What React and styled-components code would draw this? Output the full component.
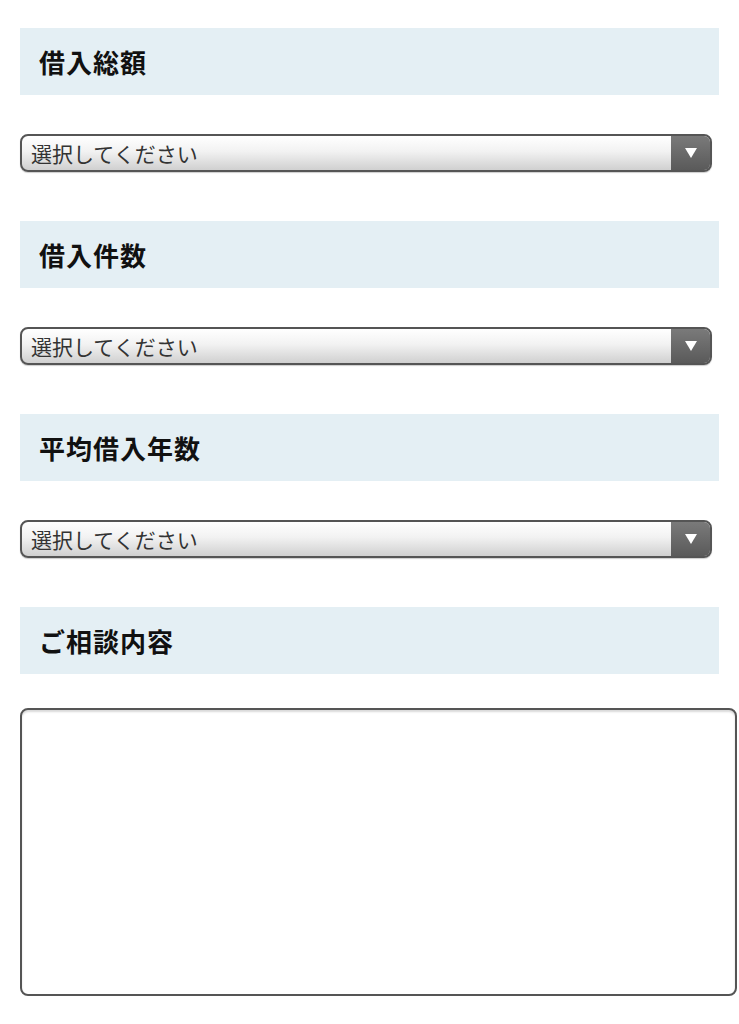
import * as React from 'react'
import styled, {createGlobalStyle} from 'styled-components'

const GlobalStyle = createGlobalStyle`
  body {
    margin: 0;
    background: #fff;
    font-family: 'Noto Sans CJK JP', 'Noto Sans', sans-serif;
  }
`

const fields = [
    {label: '借入総額', type: 'select'},
    {label: '借入件数', type: 'select'},
    {label: '平均借入年数', type: 'select'},
    {label: 'ご相談内容', type: 'textarea'},
]

function App() {
    return (
        <Form>
            <GlobalStyle/>
            {fields.map(field => (
                <Section key={field.label} $gap={field.type === 'select' ? 39 : 34}>
                    <Heading>{field.label}</Heading>
                    {field.type === 'select' ? (
                        <SelectBox>
                            <SelectText>選択してください</SelectText>
                            <ArrowBox>
                                <svg width="14" height="12" viewBox="0 0 14 12">
                                    <path d="M1 1 L13 1 L7 11 Z" fill="#fff"/>
                                </svg>
                            </ArrowBox>
                        </SelectBox>
                    ) : (
                        <TextArea/>
                    )}
                </Section>
            ))}
        </Form>
    )
}

export default App

const Form = styled.div`
  display: flex;
  flex-direction: column;
  gap: 49px;
  padding: 28px 0 0 20px;
`

const Section = styled.section`
  display: flex;
  flex-direction: column;
  gap: ${props => props.$gap}px;
`

const Heading = styled.h3`
  margin: 0;
  width: 699px;
  height: 67px;
  box-sizing: border-box;
  padding-left: 19px;
  display: flex;
  align-items: center;
  background-color: #e4eff4;
  color: #111;
  font-size: 26px;
  font-weight: bold;
  letter-spacing: 1px;
`

const SelectBox = styled.div`
  width: 692px;
  height: 38px;
  box-sizing: border-box;
  display: flex;
  border: 2px solid #555;
  border-radius: 8px;
  overflow: hidden;
  background: linear-gradient(to bottom, #ffffff 0%, #f2f2f2 45%, #d0d0d0 100%);
  box-shadow: 0 1px 1px rgba(0, 0, 0, 0.2);
`

const SelectText = styled.div`
  flex: 1;
  display: flex;
  align-items: center;
  padding-left: 9px;
  color: #333;
  font-size: 21px;
`

const ArrowBox = styled.div`
  width: 39px;
  display: flex;
  align-items: center;
  justify-content: center;
  background: linear-gradient(to bottom, #7a7a7a 0%, #5a5a5a 100%);
`

const TextArea = styled.textarea`
  width: 717px;
  height: 288px;
  box-sizing: border-box;
  border: 2px solid #555;
  border-radius: 8px;
  resize: none;
  background: #fff;
  box-shadow: inset 0 2px 2px rgba(0, 0, 0, 0.15);
  margin: 0;
`
